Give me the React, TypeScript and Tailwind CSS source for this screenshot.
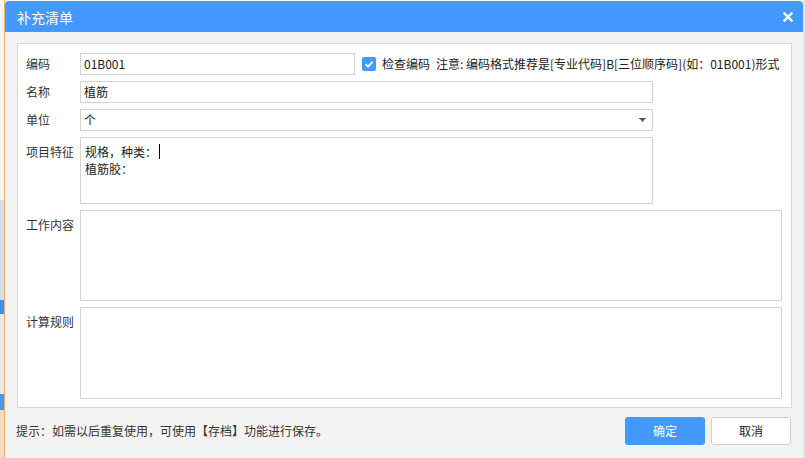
import React from 'react';

const font = { fontFamily: '"Noto Sans CJK SC", "Microsoft YaHei", sans-serif' };

const Label: React.FC<{ text: string; top?: boolean }> = ({ text, top }) => (
  <div className={`w-[54px] shrink-0 text-[12px] text-[#333] ${top ? 'pt-[7px] leading-[16px]' : 'leading-[22px]'}`}>
    {text}
  </div>
);

export default function App() {
  return (
    <div className="w-[805px] h-[458px] overflow-hidden flex bg-[#f7f7f7]" style={font}>
      {/* 背景 左側 */}
      <div className="w-[5px] shrink-0 flex flex-col border-r border-[#f0b060]">
        <div className="h-[200px] bg-[#f4f4f4]" />
        <div className="h-[100px] bg-[#d4dceb]" />
        <div className="h-[14px] bg-[#3d8ef0]" />
        <div className="h-[80px] bg-[#e9e9e9]" />
        <div className="h-[16px] bg-[#4c95ee]" />
        <div className="flex-1 bg-[#f3dcc2]" />
      </div>

      {/* ダイアログ */}
      <div className="w-[798px] shrink-0 mt-[1px] flex flex-col rounded-t-[4px] overflow-hidden bg-[#f3f3f3]">
        <div className="h-[31px] shrink-0 bg-[#4499ff] flex items-center justify-between pl-[12px] pr-[10px]">
          <span className="text-[14px] text-white leading-none">补充清单</span>
          <svg width="10" height="10" viewBox="0 0 10 10">
            <path d="M1.5 1.5 L8.5 8.5 M8.5 1.5 L1.5 8.5" stroke="#fff" strokeWidth="2.4" strokeLinecap="square" />
          </svg>
        </div>

        <div className="flex-1 flex flex-col px-[12px] pt-[11px]">
          <div className="w-[775px] h-[365px] bg-white border border-[#d8d8d8] pl-[8px] pt-[9px] flex flex-col gap-[6px]">
            {/* 编码 */}
            <div className="flex items-center h-[22px]">
              <Label text="编码" />
              <div className="w-[275px] h-[22px] border border-[#d4d4d4] px-[3px] text-[12px] leading-[20px] text-[#222]">
                01B001
              </div>
              <div className="ml-[7px] w-[14px] h-[14px] rounded-[2px] bg-[#4499ff] flex items-center justify-center">
                <svg width="10" height="10" viewBox="0 0 10 10">
                  <path d="M1.5 5.2 L4 7.6 L8.6 2.6" stroke="#fff" strokeWidth="1.8" fill="none" />
                </svg>
              </div>
              <span className="ml-[6px] text-[12px] text-[#222]">检查编码</span>
              <span className="ml-[6px] text-[12px] text-[#222] whitespace-nowrap">
                注意: 编码格式推荐是[专业代码]B[三位顺序码](如：01B001)形式
              </span>
            </div>

            {/* 名称 */}
            <div className="flex items-center h-[22px]">
              <Label text="名称" />
              <div className="w-[573px] h-[22px] border border-[#d4d4d4] px-[3px] text-[12px] leading-[20px] text-[#222]">
                植筋
              </div>
            </div>

            {/* 单位 */}
            <div className="flex items-center h-[22px]">
              <Label text="单位" />
              <div className="w-[573px] h-[22px] border border-[#d4d4d4] pl-[3px] pr-[6px] flex items-center justify-between text-[12px] text-[#222]">
                <span className="leading-[20px]">个</span>
                <svg width="7" height="5" viewBox="0 0 7 5">
                  <path d="M0 0 H7 V1 H0 Z M1 1 H6 L3.5 4 Z" fill="#555" />
                </svg>
              </div>
            </div>

            {/* 项目特征 */}
            <div className="flex">
              <Label text="项目特征" top />
              <div className="w-[573px] h-[67px] border border-[#d4d4d4] pl-[4px] pt-[5px] text-[12px] leading-[17px] text-[#222]">
                <div className="flex items-center">
                  规格，种类：<span className="ml-[2px] inline-block w-[1px] h-[15px] bg-black" />
                </div>
                <div>植筋胶：</div>
              </div>
            </div>

            {/* 工作内容 */}
            <div className="flex">
              <Label text="工作内容" top />
              <div className="w-[702px] h-[91px] border border-[#d4d4d4]" />
            </div>

            {/* 计算规则 */}
            <div className="flex">
              <Label text="计算规则" top />
              <div className="w-[702px] h-[92px] border border-[#d4d4d4]" />
            </div>
          </div>

          {/* フッター */}
          <div className="flex items-center justify-between mt-[9px] pr-[0px]">
            <span className="-ml-[1px] text-[12px] text-[#333]">提示：如需以后重复使用，可使用【存档】功能进行保存。</span>
            <div className="flex gap-[6px]">
              <button className="w-[80px] h-[28px] rounded-[3px] bg-[#4499ff] text-white text-[12px]">确定</button>
              <button className="w-[80px] h-[28px] rounded-[3px] bg-white border border-[#cfcfcf] text-[#222] text-[12px]">取消</button>
            </div>
          </div>
        </div>
      </div>

      {/* 背景 右側 */}
      <div className="flex-1 bg-[#e3e3e3]" />
    </div>
  );
}
